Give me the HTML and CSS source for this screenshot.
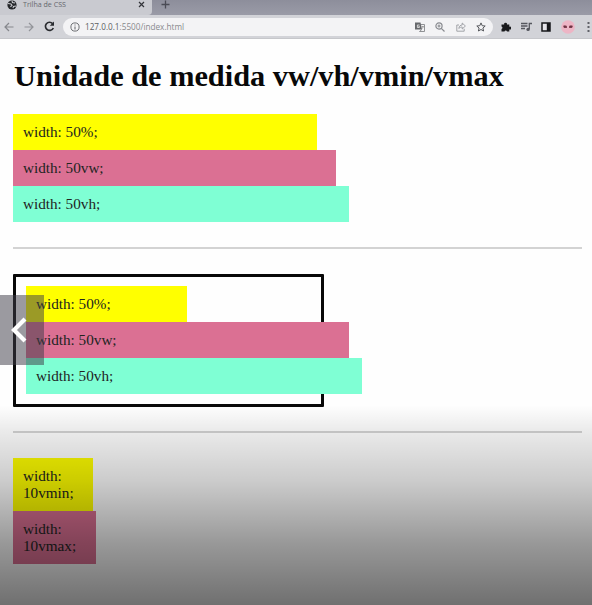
FILE: index.html
```html
<!DOCTYPE html>
<html lang="pt-BR">
<head>
<meta charset="utf-8">
<title>Trilha de CSS</title>
<link rel="stylesheet" href="styles.css">
</head>
<body>
<header class="browser">
  <div class="tabs">
    <div class="tab">
      <svg class="globe" width="10" height="10" viewBox="0 0 10 10"><circle cx="5" cy="5" r="4.6" fill="#25272b"/><path d="M1 3.5l3 .4 1 1.6-1.6 1.3M5 1l.5 1.5L8 3M6 8l.5-1.6L9 6" fill="none" stroke="#c8c9ce" stroke-width="1.1"/></svg>
      <span class="tab-title">Trilha de CSS</span>
      <svg class="close" width="7" height="7" viewBox="0 0 7 7"><path d="M1 1l5 5M6 1L1 6" stroke="#33353a" stroke-width="1.2"/></svg>
    </div>
    <svg class="plus" width="9" height="9" viewBox="0 0 9 9"><path d="M4.5 .5v8M.5 4.5h8" stroke="#4a4b55" stroke-width="1.3"/></svg>
  </div>
  <div class="toolbar">
    <svg width="10" height="10" viewBox="0 0 10 10"><path d="M9.5 5H1M5 1L1 5l4 4" fill="none" stroke="#85878c" stroke-width="1.2"/></svg>
    <svg class="forward" width="10" height="10" viewBox="0 0 10 10"><path d="M.5 5H9M5 1l4 4-4 4" fill="none" stroke="#929499" stroke-width="1.2"/></svg>
    <svg class="reload" width="11" height="11" viewBox="0 0 11 11"><path d="M9.3 7A4.1 4.1 0 1 1 8.6 2.6" fill="none" stroke="#292b2f" stroke-width="1.7"/><path d="M10 .5v4.2H5.8z" fill="#292b2f"/></svg>
    <div class="address">
      <svg width="10" height="10" viewBox="0 0 10 10"><circle cx="5" cy="5" r="4.1" fill="none" stroke="#6d6f73"/><path d="M5 4.4v3M5 2.4v1.1" stroke="#6d6f73" stroke-width="1.1"/></svg>
      <span class="url"><span class="host">127.0.0.1</span>:5500/index.html</span>
      <div class="actions">
        <svg width="10" height="10" viewBox="0 0 10 10"><path d="M0 .5h5.5l1.5 7H0z" fill="#66686c"/><path d="M6 2.5h3.5v7H4.5L6.8 7.5" fill="none" stroke="#85878a" stroke-width=".9"/><path d="M4.5 3H2.4v2.5h2V4.3h-1" fill="none" stroke="#eee" stroke-width=".8"/><path d="M6.7 4.5h2M7 6.7l1.5-2" stroke="#777" stroke-width=".7"/></svg>
        <svg width="10" height="10" viewBox="0 0 10 10"><circle cx="4" cy="4" r="3.1" fill="none" stroke="#898b90" stroke-width="1.2"/><path d="M6.3 6.3L9.5 9.5M2.5 4h3M4 2.5v3" stroke="#898b90" stroke-width="1.2"/></svg>
        <svg width="10" height="10" viewBox="0 0 10 10"><path d="M3 3H.8v6.2h7.4V6.8M2.8 6.5C3 4 4.6 3 6.2 3V1l3.2 3-3.2 3V5C5 5 4 5.3 2.8 6.5z" fill="none" stroke="#999ba0" stroke-width=".9"/></svg>
        <svg width="10" height="10" viewBox="0 0 10 10"><path d="M5 .9l1.2 2.8 3 .3-2.3 2 .7 3L5 7.5 2.4 9l.7-3L.8 4l3-.3z" fill="none" stroke="#55575c"/></svg>
      </div>
    </div>
    <div class="extensions">
      <svg width="10" height="10" viewBox="0 0 10 10"><path d="M.5 2.5h2.7a1.4 1.4 0 1 1 2.7 0h2.4v2.3a1.4 1.4 0 1 1 0 2.6v2.1H6a1.3 1.3 0 0 0-2.5 0h-3V7a1.3 1.3 0 0 0 0-2.5z" fill="#18191c"/></svg>
      <svg width="11" height="10" viewBox="0 0 11 10"><path d="M0 1.5h6.5M0 4h6.5M0 6.5h4M8.3 7V1.5H11" fill="none" stroke="#55575e" stroke-width="1.3"/><circle cx="7.1" cy="7.4" r="1.7" fill="#55575e"/></svg>
      <svg width="10" height="10" viewBox="0 0 10 10"><path d="M1 1h8v8H1z" fill="#e5e5ea" stroke="#17181b" stroke-width="1.5"/><path d="M5.8 1H9v8H5.8z" fill="#17181b"/></svg>
      <svg width="14" height="14" viewBox="0 0 14 14"><circle cx="7" cy="7" r="6.8" fill="#edb5c5"/><path d="M2 6q1.5-1.5 4 0v2H3zM8 6q2-1.5 4 0l-1 2H8z" fill="#8b4658"/><path d="M3.3 6.8h1.3M9.3 6.8h1.3" stroke="#44252e"/></svg>
      <svg class="more" width="3" height="10" viewBox="0 0 3 10"><path d="M.5 0h2v2h-2zM.5 4h2v2h-2zM.5 8h2v2h-2z" fill="#606268"/></svg>
    </div>
  </div>
</header>
<main class="page">
  <h1>Unidade de medida vw/vh/vmin/vmax</h1>
  <section class="group">
    <div class="box yellow percent">width: 50%;</div>
    <div class="box pink vw">width: 50vw;</div>
    <div class="box aqua vh">width: 50vh;</div>
  </section>
  <hr>
  <section class="group framed">
    <div class="box yellow percent">width: 50%;</div>
    <div class="box pink vw">width: 50vw;</div>
    <div class="box aqua vh">width: 50vh;</div>
  </section>
  <hr>
  <section class="group">
    <div class="box yellow vmin">width: 10vmin;</div>
    <div class="box pink vmax">width: 10vmax;</div>
  </section>
</main>
<div class="shade"></div>
<div class="previous"><svg width="16" height="28" viewBox="0 0 16 28"><path d="M14 3L3 14l11 11" fill="none" stroke="#fff" stroke-width="4.2"/></svg></div>
</body>
</html>
```
FILE: styles.css
```css
* { box-sizing: border-box; }
body {
  margin: 0;
  width: 592px;
  height: 605px;
  position: relative;
  overflow: hidden;
  background: #fefefe;
  color: #111;
  font-family: "Liberation Serif", serif;
}
svg { display: block; flex: none; }
.browser { height: 39px; font-family: "Open Sans", sans-serif; }
.tabs { height: 15px; display: flex; background: linear-gradient(#8d8e9b, #9a9ba7); }
.tab {
  width: 152px;
  height: 15px;
  display: flex;
  align-items: center;
  padding: 0 7px 6px;
  background: #c9cad0;
  border-radius: 0 0 4px 0;
}
.tab-title { margin-left: 6px; font-size: 7.1px; line-height: 9px; color: #66686e; white-space: nowrap; }
.close { margin-left: auto; }
.plus { margin-left: 9px; }
.toolbar {
  height: 24px;
  display: flex;
  align-items: center;
  padding: 0 2px 0 4px;
  background: #d2d3d8;
  border-bottom: 1px solid #c6c7cb;
}
.forward { margin-left: 10px; }
.reload { margin-left: 10px; }
.address {
  width: 430px;
  height: 18px;
  margin-left: 8px;
  padding: 0 7px 0 7px;
  display: flex;
  align-items: center;
  background: #f3f3f5;
  border-radius: 9px;
}
.url { margin-left: 5px; font-size: 8.2px; line-height: 12px; color: #88898d; white-space: nowrap; }
.host { color: #5c5e62; }
.actions { margin-left: auto; display: flex; gap: 10.5px; }
.extensions { flex: 1; margin-left: 8px; display: flex; align-items: center; gap: 9.5px; }
.more { margin-left: auto; }
.page { padding: 20px 10px 0 13px; }
h1 { margin: 0 0 20px 1px; font-size: 30.35px; line-height: 35px; font-weight: 700; color: #080808; white-space: nowrap; }
.box { padding: 9px 9px 10px 10px; font-size: 15.2px; line-height: 17px; color: #22241f; }
.yellow { background: #ffff00; }
.pink { background: #db7093; }
.aqua { background: #7fffd4; }
.percent { width: 303.5px; }
.vw { width: 323px; }
.vh { width: 336px; }
.vmin { width: 80px; }
.vmax { width: 83px; }
hr { height: 2px; margin: 24.5px 0 25px; border: 0; background: #d3d3d3; }
.framed { width: 310.5px; height: 133px; padding: 9.5px 10px; border: 3px solid #080808; border-radius: 1px; }
.framed .percent { width: 161px; }
.shade {
  position: absolute;
  inset: 405px 0 0;
  background: linear-gradient(rgba(0,0,0,0), rgba(0,0,0,.08) 13%, rgba(0,0,0,.2) 38%, rgba(0,0,0,.4) 69%, rgba(0,0,0,.56));
}
.previous {
  position: absolute;
  left: 0;
  top: 295px;
  width: 44px;
  height: 70px;
  display: flex;
  align-items: center;
  padding-left: 11px;
  background: rgba(63,61,73,.52);
}
```
